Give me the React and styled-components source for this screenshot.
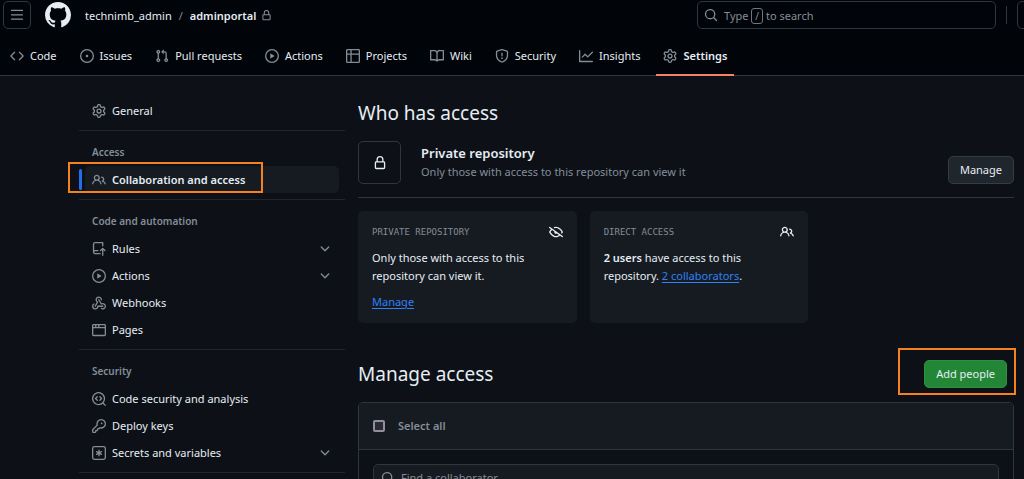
import React from 'react';
import styled, { createGlobalStyle } from 'styled-components';

const ICONS = {
    menu: 'M1 2.75A.75.75 0 0 1 1.75 2h12.5a.75.75 0 0 1 0 1.5H1.75A.75.75 0 0 1 1 2.75Zm0 5A.75.75 0 0 1 1.75 7h12.5a.75.75 0 0 1 0 1.5H1.75A.75.75 0 0 1 1 7.75ZM1.75 12h12.5a.75.75 0 0 1 0 1.5H1.75a.75.75 0 0 1 0-1.5Z',
    github: 'M8 0c4.42 0 8 3.58 8 8a8.013 8.013 0 0 1-5.45 7.59c-.4.08-.55-.17-.55-.38 0-.27.01-1.13.01-2.2 0-.75-.25-1.23-.54-1.48 1.78-.2 3.65-.88 3.65-3.95 0-.88-.31-1.59-.82-2.15.08-.2.36-1.02-.08-2.12 0 0-.67-.22-2.2.82-.64-.18-1.32-.27-2-.27-.68 0-1.36.09-2 .27-1.53-1.03-2.2-.82-2.2-.82-.44 1.1-.16 1.92-.08 2.12-.51.56-.82 1.28-.82 2.15 0 3.06 1.86 3.75 3.64 3.95-.23.2-.44.55-.51 1.07-.46.21-1.61.55-2.33-.66-.15-.24-.6-.83-1.23-.82-.67.01-.27.38.01.53.34.19.73.9.82 1.13.16.45.68 1.31 2.69.94 0 .67.01 1.3.01 1.49 0 .21-.15.45-.55.38A7.995 7.995 0 0 1 0 8c0-4.42 3.58-8 8-8Z',
    lock: 'M4 4a4 4 0 0 1 8 0v2h.25c.966 0 1.75.784 1.75 1.75v5.5A1.75 1.75 0 0 1 12.25 15h-8.5A1.75 1.75 0 0 1 2 13.25v-5.5C2 6.784 2.784 6 3.75 6H4Zm8.25 3.5h-8.5a.25.25 0 0 0-.25.25v5.5c0 .138.112.25.25.25h8.5a.25.25 0 0 0 .25-.25v-5.5a.25.25 0 0 0-.25-.25ZM10.5 6V4a2.5 2.5 0 1 0-5 0v2Z',
    code: 'm11.28 3.22 4.25 4.25a.75.75 0 0 1 0 1.06l-4.25 4.25a.749.749 0 0 1-1.275-.326.749.749 0 0 1 .215-.734L13.94 8l-3.72-3.72a.749.749 0 0 1 .326-1.275.749.749 0 0 1 .734.215Zm-6.56 0a.751.751 0 0 1 1.042.018.751.751 0 0 1 .018 1.042L2.06 8l3.72 3.72a.749.749 0 0 1-.326 1.275.749.749 0 0 1-.734-.215L.47 8.53a.75.75 0 0 1 0-1.06Z',
    issue: 'M8 9.5a1.5 1.5 0 1 0 0-3 1.5 1.5 0 0 0 0 3ZM8 0a8 8 0 1 1 0 16A8 8 0 0 1 8 0ZM1.5 8a6.5 6.5 0 1 0 13 0 6.5 6.5 0 0 0-13 0Z',
    pull: 'M1.5 3.25a2.25 2.25 0 1 1 3 2.122v5.256a2.251 2.251 0 1 1-1.5 0V5.372A2.25 2.25 0 0 1 1.5 3.25Zm5.677-.177L9.573.677A.25.25 0 0 1 10 .854V2.5h1A2.5 2.5 0 0 1 13.5 5v5.628a2.251 2.251 0 1 1-1.5 0V5a1 1 0 0 0-1-1h-1v1.646a.25.25 0 0 1-.427.177L7.177 3.427a.25.25 0 0 1 0-.354ZM3.75 2.5a.75.75 0 1 0 0 1.5.75.75 0 0 0 0-1.5Zm0 9.5a.75.75 0 1 0 0 1.5.75.75 0 0 0 0-1.5Zm8.25.75a.75.75 0 1 0 1.5 0 .75.75 0 0 0-1.5 0Z',
    play: 'M8 0a8 8 0 1 1 0 16A8 8 0 0 1 8 0ZM1.5 8a6.5 6.5 0 1 0 13 0 6.5 6.5 0 0 0-13 0Zm4.879-2.773 4.264 2.559a.25.25 0 0 1 0 .428l-4.264 2.559A.25.25 0 0 1 6 10.559V5.442a.25.25 0 0 1 .379-.215Z',
    table: 'M0 1.75C0 .784.784 0 1.75 0h12.5C15.216 0 16 .784 16 1.75v12.5A1.75 1.75 0 0 1 14.25 16H1.75A1.75 1.75 0 0 1 0 14.25ZM6.5 6.5v8h7.75a.25.25 0 0 0 .25-.25V6.5Zm8-1.5V1.75a.25.25 0 0 0-.25-.25H6.5V5Zm-13 1.5v7.75c0 .138.112.25.25.25H5v-8ZM5 5V1.5H1.75a.25.25 0 0 0-.25.25V5Z',
    book: 'M0 1.75A.75.75 0 0 1 .75 1h4.253c1.227 0 2.317.59 3 1.501A3.743 3.743 0 0 1 11.006 1h4.245a.75.75 0 0 1 .75.75v10.5a.75.75 0 0 1-.75.75h-4.507a2.25 2.25 0 0 0-1.591.659l-.622.621a.75.75 0 0 1-1.06 0l-.622-.621A2.25 2.25 0 0 0 5.258 13H.75a.75.75 0 0 1-.75-.75Zm7.251 10.324.004-5.073-.002-2.253A2.25 2.25 0 0 0 5.003 2.5H1.5v9h3.757a3.75 3.75 0 0 1 1.994.574ZM8.755 4.75l-.004 7.322a3.752 3.752 0 0 1 1.992-.572H14.5v-9h-3.495a2.25 2.25 0 0 0-2.25 2.25Z',
    shield: 'M7.467.133a1.748 1.748 0 0 1 1.066 0l5.25 1.68A1.75 1.75 0 0 1 15 3.48V7c0 1.566-.32 3.182-1.303 4.682-.983 1.498-2.585 2.813-5.032 3.855a1.697 1.697 0 0 1-1.33 0c-2.447-1.042-4.049-2.357-5.032-3.855C1.32 10.182 1 8.566 1 7V3.48a1.75 1.75 0 0 1 1.217-1.667Zm.61 1.429a.25.25 0 0 0-.153 0l-5.25 1.68a.25.25 0 0 0-.174.238V7c0 1.358.275 2.666 1.057 3.86.784 1.194 2.121 2.34 4.366 3.297a.196.196 0 0 0 .154 0c2.245-.956 3.582-2.104 4.366-3.298C13.225 9.666 13.5 8.36 13.5 7V3.48a.251.251 0 0 0-.174-.237l-5.25-1.68ZM8.75 4.75v3a.75.75 0 0 1-1.5 0v-3a.75.75 0 0 1 1.5 0ZM9 10.5a1 1 0 1 1-2 0 1 1 0 0 1 2 0Z',
    graph: 'M1.5 1.75V13.5h13.75a.75.75 0 0 1 0 1.5H.75a.75.75 0 0 1-.75-.75V1.75a.75.75 0 0 1 1.5 0Zm14.28 2.53-5.25 5.25a.75.75 0 0 1-1.06 0L7 7.06 4.28 9.78a.751.751 0 0 1-1.042-.018.751.751 0 0 1-.018-1.042l3.25-3.25a.75.75 0 0 1 1.06 0L10 7.94l4.72-4.72a.751.751 0 0 1 1.042.018.751.751 0 0 1 .018 1.042Z',
    gear: 'M8 0a8.2 8.2 0 0 1 .701.031C9.444.095 9.99.645 10.16 1.29l.288 1.107c.018.066.079.158.212.224.231.114.454.243.668.386.123.082.233.09.299.071l1.103-.303c.644-.176 1.392.021 1.82.63.27.385.506.792.704 1.218.315.675.111 1.422-.364 1.891l-.814.806c-.049.048-.098.147-.088.294.016.257.016.515 0 .772-.01.147.038.246.088.294l.814.806c.475.469.679 1.216.364 1.891a7.977 7.977 0 0 1-.704 1.217c-.428.61-1.176.807-1.82.63l-1.102-.302c-.067-.019-.177-.011-.3.071a5.909 5.909 0 0 1-.668.386c-.133.066-.194.158-.211.224l-.29 1.106c-.168.646-.715 1.196-1.458 1.26a8.006 8.006 0 0 1-1.402 0c-.743-.064-1.289-.614-1.458-1.26l-.289-1.106c-.018-.066-.079-.158-.212-.224a5.738 5.738 0 0 1-.668-.386c-.123-.082-.233-.09-.299-.071l-1.103.303c-.644.176-1.392-.021-1.82-.63a8.12 8.12 0 0 1-.704-1.218c-.315-.675-.111-1.422.363-1.891l.815-.806c.05-.048.098-.147.088-.294a6.214 6.214 0 0 1 0-.772c.01-.147-.038-.246-.088-.294l-.815-.806C.635 6.045.431 5.298.746 4.623a7.92 7.92 0 0 1 .704-1.217c.428-.61 1.176-.807 1.82-.63l1.102.302c.067.019.177.011.3-.071.214-.143.437-.272.668-.386.133-.066.194-.158.211-.224l.29-1.106C6.009.645 6.556.095 7.299.03 7.53.01 7.764 0 8 0Zm-.571 1.525c-.036.003-.108.036-.137.146l-.289 1.105c-.147.561-.549.967-.998 1.189-.173.086-.34.183-.5.29-.417.278-.97.423-1.529.27l-1.103-.303c-.109-.03-.175.016-.195.045-.22.312-.412.644-.573.99-.014.031-.021.11.059.19l.815.806c.411.406.562.957.53 1.456a4.709 4.709 0 0 0 0 .582c.032.499-.119 1.05-.53 1.456l-.815.806c-.081.08-.073.159-.059.19.162.346.353.677.573.989.02.03.085.076.195.046l1.102-.303c.56-.153 1.113-.008 1.53.27.161.107.328.204.501.29.447.222.85.629.997 1.189l.289 1.105c.029.109.101.143.137.146a6.6 6.6 0 0 0 1.142 0c.036-.003.108-.036.137-.146l.289-1.105c.147-.561.549-.967.998-1.189.173-.086.34-.183.5-.29.417-.278.97-.423 1.529-.27l1.103.303c.109.029.175-.016.195-.045.22-.313.411-.644.573-.99.014-.031.021-.11-.059-.19l-.815-.806c-.411-.406-.562-.957-.53-1.456a4.709 4.709 0 0 0 0-.582c-.032-.499.119-1.05.53-1.456l.815-.806c.081-.08.073-.159.059-.19a6.464 6.464 0 0 0-.573-.989c-.02-.03-.085-.076-.195-.046l-1.102.303c-.56.153-1.113.008-1.53-.27a4.44 4.44 0 0 0-.501-.29c-.447-.222-.85-.629-.997-1.189l-.289-1.105c-.029-.11-.101-.143-.137-.146a6.6 6.6 0 0 0-1.142 0ZM11 8a3 3 0 1 1-6 0 3 3 0 0 1 6 0ZM9.5 8a1.5 1.5 0 1 0-3.001.001A1.5 1.5 0 0 0 9.5 8Z',
    search: 'M10.68 11.74a6 6 0 0 1-7.922-8.982 6 6 0 0 1 8.982 7.922l3.04 3.04a.749.749 0 0 1-.326 1.275.749.749 0 0 1-.734-.215ZM11.5 7a4.499 4.499 0 1 0-8.997 0A4.499 4.499 0 0 0 11.5 7Z',
    people: 'M2 5.5a3.5 3.5 0 1 1 5.898 2.549 5.508 5.508 0 0 1 3.034 4.084.75.75 0 1 1-1.482.235 4 4 0 0 0-7.9 0 .75.75 0 0 1-1.482-.236A5.507 5.507 0 0 1 3.102 8.05 3.493 3.493 0 0 1 2 5.5ZM11 4a3.001 3.001 0 0 1 2.22 5.018 5.01 5.01 0 0 1 2.56 3.012.749.749 0 0 1-.885.954.752.752 0 0 1-.549-.514 3.507 3.507 0 0 0-2.522-2.372.75.75 0 0 1-.574-.73v-.352a.75.75 0 0 1 .416-.672A1.5 1.5 0 0 0 11 5.5.75.75 0 0 1 11 4Zm-5.5-.5a2 2 0 1 0-.001 3.999A2 2 0 0 0 5.5 3.5Z',
    repoPush: 'M1 2.5A2.5 2.5 0 0 1 3.5 0h8.75a.75.75 0 0 1 .75.75v3.5a.75.75 0 0 1-1.5 0V1.5h-8a1 1 0 0 0-1 1v6.708A2.493 2.493 0 0 1 3.5 9h3.25a.75.75 0 0 1 0 1.5H3.5a1 1 0 0 0 0 2h5.75a.75.75 0 0 1 0 1.5H3.5A2.5 2.5 0 0 1 1 11.5Zm13.23 7.79h-.001l-1.224-1.224v6.184a.75.75 0 0 1-1.5 0V9.066L10.28 10.29a.75.75 0 0 1-1.06-1.061l2.505-2.504a.75.75 0 0 1 1.06 0L15.29 9.23a.751.751 0 0 1-.018 1.042.751.751 0 0 1-1.042.018Z',
    webhook: 'M5.5 4.25a2.25 2.25 0 0 1 4.5 0 .75.75 0 0 0 1.5 0 3.75 3.75 0 1 0-6.14 2.889l-2.272 4.258a.75.75 0 0 0 1.324.706L7 7.25a.75.75 0 0 0-.309-1.015A2.25 2.25 0 0 1 5.5 4.25ZM7.364 3.607a.75.75 0 0 1 1.03.257l2.608 4.349a3.75 3.75 0 1 1-.628 6.785.75.75 0 0 1 .752-1.299 2.25 2.25 0 1 0-.033-3.88.75.75 0 0 1-1.03-.256L7.107 4.636a.75.75 0 0 1 .257-1.03ZM2.9 8.776A.75.75 0 0 1 2.625 9.8 2.25 2.25 0 1 0 6 11.75a.75.75 0 0 1 .75-.751h5.5a.75.75 0 0 1 0 1.5H7.425a3.751 3.751 0 1 1-5.55-3.998.75.75 0 0 1 1.024.274Z',
    browser: 'M0 2.75C0 1.784.784 1 1.75 1h12.5c.966 0 1.75.784 1.75 1.75v10.5A1.75 1.75 0 0 1 14.25 15H1.75A1.75 1.75 0 0 1 0 13.25ZM14.5 6h-13v7.25c0 .138.112.25.25.25h12.5a.25.25 0 0 0 .25-.25Zm-6-3.5v2h6V2.75a.25.25 0 0 0-.25-.25ZM5 2.5v2h2v-2Zm-3.25 0a.25.25 0 0 0-.25.25V4.5h2v-2Z',
    codescan: 'M8.47 4.97a.75.75 0 0 0 0 1.06L9.94 7.5 8.47 8.97a.75.75 0 1 0 1.06 1.06l2-2a.75.75 0 0 0 0-1.06l-2-2a.75.75 0 0 0-1.06 0ZM6.53 6.03a.75.75 0 0 0-1.06-1.06l-2 2a.75.75 0 0 0 0 1.06l2 2a.75.75 0 1 0 1.06-1.06L5.06 7.5l1.47-1.47ZM12.246 13.307a7.501 7.501 0 1 1 1.06-1.06l2.474 2.473a.749.749 0 0 1-.326 1.275.749.749 0 0 1-.734-.215ZM1.5 7.5a6.002 6.002 0 0 0 3.608 5.504 6.002 6.002 0 0 0 6.486-1.117.748.748 0 0 1 .292-.293A6 6 0 1 0 1.5 7.5Z',
    key: 'M10.5 0a5.499 5.499 0 1 1-1.288 10.848l-.932.932a.749.749 0 0 1-.53.22H7v.75a.749.749 0 0 1-.22.53l-.5.5a.749.749 0 0 1-.53.22H5v.75a.749.749 0 0 1-.22.53l-.5.5a.749.749 0 0 1-.53.22h-2A1.75 1.75 0 0 1 0 14.25v-2c0-.199.079-.389.22-.53l4.932-4.932A5.5 5.5 0 0 1 10.5 0Zm-4 5.5c-.001.431.069.86.205 1.269a.75.75 0 0 1-.181.768L1.5 12.56v1.69c0 .138.112.25.25.25h1.69l.06-.06v-1.19a.75.75 0 0 1 .75-.75h1.19l.06-.06v-1.19a.75.75 0 0 1 .75-.75h1.19l1.023-1.025a.75.75 0 0 1 .768-.18A4 4 0 1 0 6.5 5.5ZM11 6a1 1 0 1 1 0-2 1 1 0 0 1 0 2Z',
    asterisk: 'M0 2.75A2.75 2.75 0 0 1 2.75 0h10.5A2.75 2.75 0 0 1 16 2.75v10.5A2.75 2.75 0 0 1 13.25 16H2.75A2.75 2.75 0 0 1 0 13.25ZM2.75 1.5c-.69 0-1.25.56-1.25 1.25v10.5c0 .69.56 1.25 1.25 1.25h10.5c.69 0 1.25-.56 1.25-1.25V2.75c0-.69-.56-1.25-1.25-1.25ZM8 4a.75.75 0 0 1 .75.75V6.7l1.69-.975a.75.75 0 0 1 .75 1.3L9.5 8l1.69.976a.75.75 0 0 1-.75 1.298L8.75 9.3v1.951a.75.75 0 0 1-1.5 0V9.299l-1.69.976a.75.75 0 0 1-.75-1.3L6.5 8l-1.69-.975a.75.75 0 0 1 .75-1.3l1.69.976V4.75A.75.75 0 0 1 8 4Z',
    chevron: 'M12.78 5.22a.749.749 0 0 1 0 1.06l-4.25 4.25a.749.749 0 0 1-1.06 0L3.22 6.28a.749.749 0 1 1 1.06-1.06L8 8.939l3.72-3.719a.749.749 0 0 1 1.06 0Z',
    eyeClosed: 'M.143 2.31a.75.75 0 0 1 1.047-.167l14.5 10.5a.75.75 0 1 1-.88 1.214l-2.248-1.628C11.346 13.19 9.792 14 8 14c-1.981 0-3.67-.992-4.933-2.078C1.797 10.832.88 9.577.43 8.9a1.619 1.619 0 0 1 0-1.797c.353-.533.995-1.42 1.868-2.305L.31 3.357A.75.75 0 0 1 .143 2.31Zm1.536 5.622A.12.12 0 0 0 1.657 8c0 .021.006.045.022.068.412.621 1.242 1.75 2.366 2.717C5.175 11.758 6.527 12.5 8 12.5c1.195 0 2.31-.488 3.29-1.191L9.063 9.695A2 2 0 0 1 6.058 7.52L3.529 5.688a14.207 14.207 0 0 0-1.85 2.244ZM8 3.5c-.516 0-1.017.09-1.499.251a.75.75 0 1 1-.473-1.423A6.207 6.207 0 0 1 8 2c1.981 0 3.67.992 4.933 2.078 1.27 1.091 2.187 2.345 2.637 3.023a1.62 1.62 0 0 1 0 1.798c-.11.166-.248.365-.41.587a.75.75 0 1 1-1.21-.887c.148-.201.272-.382.371-.53a.119.119 0 0 0 0-.137c-.412-.621-1.242-1.75-2.366-2.717C10.825 4.242 9.473 3.5 8 3.5Z',
};

const tabs = [
    { icon: 'code', label: 'Code' },
    { icon: 'issue', label: 'Issues' },
    { icon: 'pull', label: 'Pull requests' },
    { icon: 'play', label: 'Actions' },
    { icon: 'table', label: 'Projects' },
    { icon: 'book', label: 'Wiki' },
    { icon: 'shield', label: 'Security' },
    { icon: 'graph', label: 'Insights' },
    { icon: 'gear', label: 'Settings', active: true },
];

const sections = [
    { items: [{ icon: 'gear', label: 'General' }] },
    {
        title: 'Access',
        items: [{ icon: 'people', label: 'Collaboration and access', active: true }],
    },
    {
        title: 'Code and automation',
        items: [
            { icon: 'repoPush', label: 'Rules', expandable: true },
            { icon: 'play', label: 'Actions', expandable: true },
            { icon: 'webhook', label: 'Webhooks' },
            { icon: 'browser', label: 'Pages' },
        ],
    },
    {
        title: 'Security',
        items: [
            { icon: 'codescan', label: 'Code security and analysis' },
            { icon: 'key', label: 'Deploy keys' },
            { icon: 'asterisk', label: 'Secrets and variables', expandable: true },
        ],
    },
];

const Icon = ({ name, size = 14, tone = 'muted' }) => (
    <Svg viewBox="0 0 16 16" width={size} height={size} $tone={tone} aria-hidden="true">
        <path d={ICONS[name]} />
    </Svg>
);

const App = () => (
    <Page>
        <GlobalStyle />
        <Header>
            <IconButton aria-label="Open menu">
                <Icon name="menu" />
            </IconButton>
            <LogoLink href="#" aria-label="Homepage">
                <Icon name="github" size={26} tone="bright" />
            </LogoLink>
            <Breadcrumb>
                <CrumbLink href="#">technimb_admin</CrumbLink>
                <Slash>/</Slash>
                <CrumbLink href="#" $current>adminportal</CrumbLink>
                <Icon name="lock" size={11} />
            </Breadcrumb>
            <SearchButton>
                <Icon name="search" />
                <SearchText>
                    Type <Kbd>/</Kbd> to search
                </SearchText>
            </SearchButton>
            <HeaderDivider />
            <CreateButton aria-label="Create new" />
        </Header>

        <TabBar>
            {tabs.map((tab) => (
                <Tab key={tab.label} href="#" $active={tab.active}>
                    <Icon name={tab.icon} />
                    {tab.label}
                </Tab>
            ))}
        </TabBar>

        <Layout>
            <Sidebar>
                {sections.map((section) => (
                    <Section key={section.title || 'general'}>
                        {section.title && <SectionTitle>{section.title}</SectionTitle>}
                        {section.items.map((item) => (
                            <SideItem key={item.label} href="#" $active={item.active}>
                                <Icon name={item.icon} />
                                <SideLabel>{item.label}</SideLabel>
                                {item.expandable && <Icon name="chevron" />}
                                {item.active && <ItemHighlight />}
                            </SideItem>
                        ))}
                    </Section>
                ))}
            </Sidebar>

            <Main>
                <Heading>Who has access</Heading>
                <Visibility>
                    <LockBox>
                        <Icon name="lock" tone="bright" />
                    </LockBox>
                    <VisibilityText>
                        <VisibilityTitle>Private repository</VisibilityTitle>
                        <VisibilityNote>Only those with access to this repository can view it</VisibilityNote>
                    </VisibilityText>
                    <Button>Manage</Button>
                </Visibility>

                <Cards>
                    <Card>
                        <CardHeader>
                            <CardTitle>Private repository</CardTitle>
                            <Icon name="eyeClosed" tone="bright" />
                        </CardHeader>
                        <CardText>Only those with access to this repository can view it.</CardText>
                        <CardText>
                            <Link href="#">Manage</Link>
                        </CardText>
                    </Card>
                    <Card>
                        <CardHeader>
                            <CardTitle>Direct access</CardTitle>
                            <Icon name="people" tone="bright" />
                        </CardHeader>
                        <CardText>
                            <Strong>2 users</Strong> have access to this repository. <Link href="#">2 collaborators</Link>.
                        </CardText>
                    </Card>
                </Cards>

                <ManageRow>
                    <Heading>Manage access</Heading>
                    <ButtonSpot>
                        <Button $primary>Add people</Button>
                        <ButtonHighlight />
                    </ButtonSpot>
                </ManageRow>

                <AccessBox>
                    <AccessHeader>
                        <Checkbox type="checkbox" id="select-all" />
                        <SelectLabel htmlFor="select-all">Select all</SelectLabel>
                    </AccessHeader>
                    <AccessBody>
                        <FindField>
                            <Icon name="search" />
                            <FindInput type="text" placeholder="Find a collaborator..." aria-label="Find a collaborator" />
                        </FindField>
                    </AccessBody>
                </AccessBox>
            </Main>
        </Layout>
    </Page>
);

const GlobalStyle = createGlobalStyle`
    * {
        box-sizing: border-box;
    }

    body {
        margin: 0;
        background: #0d1117;
        color: #e6edf3;
        font-family: 'Noto Sans', sans-serif;
        font-size: 11px;
        line-height: 18px;
    }

    button, input {
        font: inherit;
        color: inherit;
    }

    a {
        color: inherit;
        text-decoration: none;
    }
`;

const Page = styled.div`
    height: 100vh;
    overflow: hidden;
`;

const Svg = styled.svg`
    flex: none;
    display: block;
    fill: ${props => props.$tone === 'bright' ? '#e6edf3' : '#848d97'};
`;

const Header = styled.header`
    display: flex;
    align-items: center;
    height: 29px;
    padding: 0 0 0 3px;
    background: #010409;
    overflow: hidden;
`;

const IconButton = styled.button`
    flex: none;
    display: flex;
    align-items: center;
    justify-content: center;
    width: 28px;
    height: 28px;
    padding: 0;
    background: transparent;
    border: 1px solid #30363d;
    border-radius: 5px;
`;

const CreateButton = styled(IconButton)`
    margin: 0 -21px 0 10px;
`;

const LogoLink = styled.a`
    margin: 0 14px;
`;

const Breadcrumb = styled.nav`
    display: flex;
    align-items: center;
    gap: 5px;
    flex: 1;
    padding-top: 2px;
`;

const CrumbLink = styled.a`
    font-weight: ${props => props.$current ? 600 : 400};
`;

const Slash = styled.span`
    padding: 0 2px;
    color: #848d97;
`;

const SearchButton = styled.button`
    display: flex;
    align-items: center;
    gap: 6px;
    width: 299px;
    height: 28px;
    padding: 0 6px;
    background: transparent;
    border: 1px solid #30363d;
    border-radius: 5px;
    text-align: left;
`;

const SearchText = styled.span`
    padding-top: 2px;
    color: #848d97;
`;

const Kbd = styled.kbd`
    padding: 0 3px;
    border: 1px solid #6e7681;
    border-radius: 3px;
    font-family: inherit;
    font-size: 10px;
`;

const HeaderDivider = styled.span`
    flex: none;
    width: 1px;
    height: 18px;
    margin-left: 10px;
    background: #30363d;
`;

const TabBar = styled.nav`
    display: flex;
    gap: 9px;
    height: 47px;
    padding: 8px 3px 0;
    background: #010409;
    border-bottom: 1px solid #30363d;
`;

const Tab = styled.a`
    display: flex;
    align-items: center;
    gap: 6px;
    height: 38px;
    padding: 0 7px;
    font-weight: ${props => props.$active ? 600 : 400};
    box-shadow: ${props => props.$active ? '0 -1px 0 #f78166 inset, 0 1px 0 #f78166' : 'none'};
`;

const Layout = styled.div`
    display: grid;
    grid-template-columns: 266px 1fr;
    gap: 13px;
    padding: 21px 10px 0 79px;
`;

const Sidebar = styled.nav`
    display: flex;
    flex-direction: column;
    gap: 7px;
`;

const Section = styled.div`
    padding-bottom: 6px;
    border-bottom: 1px solid #21262d;
`;

const SectionTitle = styled.h3`
    margin: 0;
    padding: 5px 13px;
    color: #848d97;
    font-size: 10px;
    font-weight: 600;
`;

const SideItem = styled.a`
    position: relative;
    display: flex;
    align-items: center;
    gap: 6px;
    height: 27px;
    margin: 0 6px;
    padding: 0 7px;
    border-radius: 5px;
    background: ${props => props.$active ? '#151b21' : 'transparent'};
    font-weight: ${props => props.$active ? 600 : 400};

    &:before {
        content: '';
        position: absolute;
        top: 3px;
        bottom: 3px;
        left: -6px;
        width: 3px;
        border-radius: 3px;
        background: ${props => props.$active ? '#1f6feb' : 'transparent'};
    }
`;

const SideLabel = styled.span`
    flex: 1;
`;

const Highlight = styled.span`
    position: absolute;
    border: 2px solid #f5811f;
    pointer-events: none;
`;

const ItemHighlight = styled(Highlight)`
    top: -4px;
    bottom: 0;
    left: -17px;
    width: 195px;
`;

const ButtonHighlight = styled(Highlight)`
    top: -12px;
    right: -9px;
    bottom: -7px;
    left: -26px;
`;

const Main = styled.main`
    min-width: 0;
`;

const Heading = styled.h2`
    margin: 0;
    font-size: 19px;
    font-weight: 400;
    line-height: 32px;
`;

const Visibility = styled.section`
    display: flex;
    align-items: center;
    margin-top: 12px;
    padding-bottom: 13px;
    border-bottom: 1px solid #30363d;
`;

const LockBox = styled.div`
    display: flex;
    align-items: center;
    justify-content: center;
    width: 43px;
    height: 43px;
    border: 1px solid #30363d;
    border-radius: 5px;
`;

const VisibilityText = styled.div`
    display: flex;
    flex-direction: column;
    gap: 1px;
    flex: 1;
    margin-left: 20px;
`;

const VisibilityTitle = styled.div`
    font-size: 13px;
    font-weight: 600;
`;

const VisibilityNote = styled.div`
    color: #848d97;
`;

const Button = styled.button`
    align-self: flex-end;
    height: 28px;
    padding: 0 11px;
    background: ${props => props.$primary ? '#238636' : '#20262d'};
    border: 1px solid ${props => props.$primary ? '#2e9043' : '#363b42'};
    border-radius: 5px;
`;

const Cards = styled.div`
    display: flex;
    gap: 13px;
    margin-top: 13px;
`;

const Card = styled.section`
    width: calc(100% / 3);
    padding: 14px 14px 12px;
    background: #151b21;
    border-radius: 5px;
`;

const CardHeader = styled.div`
    display: flex;
    align-items: center;
    justify-content: space-between;
    height: 14px;
    margin-bottom: 10px;
`;

const CardTitle = styled.h3`
    margin: 0;
    color: #848d97;
    font-family: 'DejaVu Sans Mono', monospace;
    font-size: 9px;
    font-weight: 400;
    text-transform: uppercase;
`;

const CardText = styled.p`
    margin: 0;

    & + & {
        margin-top: 8px;
    }
`;

const Strong = styled.strong`
    font-weight: 600;
`;

const Link = styled.a`
    color: #2f81f7;
    text-decoration: underline;
    text-underline-offset: 2px;
`;

const ManageRow = styled.div`
    display: flex;
    align-items: center;
    justify-content: space-between;
    margin-top: 35px;
    padding-right: 7px;
`;

const ButtonSpot = styled.div`
    position: relative;
    display: flex;
`;

const AccessBox = styled.section`
    margin-top: 12px;
    border: 1px solid #30363d;
    border-radius: 5px;
    overflow: hidden;
`;

const AccessHeader = styled.div`
    display: flex;
    align-items: center;
    gap: 13px;
    height: 47px;
    padding: 0 14px;
    background: #151b21;
    border-bottom: 1px solid #30363d;
`;

const Checkbox = styled.input`
    appearance: none;
    width: 12px;
    height: 12px;
    margin: 0;
    background: #2b2a33;
    border: 2px solid #8f8f9d;
    border-radius: 2px;
`;

const SelectLabel = styled.label`
    color: #848d97;
    font-weight: 600;
`;

const AccessBody = styled.div`
    padding: 14px;
`;

const FindField = styled.div`
    display: flex;
    align-items: center;
    gap: 6px;
    height: 28px;
    padding: 0 7px;
    background: #151b21;
    border: 1px solid #30363d;
    border-radius: 5px;
`;

const FindInput = styled.input`
    flex: 1;
    padding: 0;
    background: transparent;
    border: none;
    outline: none;

    &::placeholder {
        color: #848d97;
        opacity: 1;
    }
`;

export default App;
